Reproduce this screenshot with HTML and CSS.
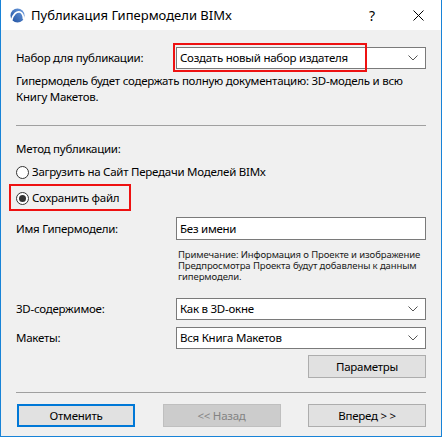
FILE: index.html
```html
<!DOCTYPE html>
<html lang="ru">
<head>
<meta charset="utf-8">
<title>Публикация Гипермодели BIMx</title>
<link rel="stylesheet" href="styles.css">
</head>
<body>
<div class="window">
  <div class="titlebar">
    <svg class="logo" width="17" height="15" viewBox="0 0 17 15">
      <defs>
        <linearGradient id="lg" x1="0" y1="1" x2="1" y2="0">
          <stop offset="0" stop-color="#1d4e9e"/>
          <stop offset="1" stop-color="#6f9fe0"/>
        </linearGradient>
      </defs>
      <circle cx="8.5" cy="7.5" r="7" fill="url(#lg)"/>
      <path d="M2.5 12.5 C4 6 8 3 11 4 C13.5 5 14.5 8 14.5 11" fill="none" stroke="#fff" stroke-width="1.8"/>
    </svg>
    <div class="title">Публикация Гипермодели BIMx</div>
    <div class="tb-help">?</div>
    <div class="tb-close">
      <svg width="11" height="11" viewBox="0 0 11 11"><path d="M0.5 0.5 L10.5 10.5 M10.5 0.5 L0.5 10.5" stroke="#000" stroke-width="1"/></svg>
    </div>
  </div>
  <div class="content">
    <div class="row row-set">
      <div class="label">Набор для публикации:</div>
      <div class="select"><span>Создать новый набор издателя</span><svg class="chev" width="10" height="6" viewBox="0 0 10 6"><path d="M0.5 0.5 L5 5 L9.5 0.5" fill="none" stroke="#555" stroke-width="1"/></svg></div>
    </div>
    <div class="desc">Гипермодель будет содержать полную документацию: 3D-модель и всю Книгу Макетов.</div>
    <div class="sep sep1"></div>
    <div class="method">Метод публикации:</div>
    <div class="radio r1"><span class="circle"></span>Загрузить на Сайт Передачи Моделей BIMx</div>
    <div class="radio r2"><span class="circle checked"></span>Сохранить файл</div>
    <div class="row row-name">
      <div class="label">Имя Гипермодели:</div>
      <div class="input">Без имени</div>
    </div>
    <div class="note">Примечание: Информация о Проекте и изображение Предпросмотра Проекта будут добавлены к данным гипермодели.</div>
    <div class="row row-3d">
      <div class="label">3D-содержимое:</div>
      <div class="select"><span>Как в 3D-окне</span><svg class="chev" width="10" height="6" viewBox="0 0 10 6"><path d="M0.5 0.5 L5 5 L9.5 0.5" fill="none" stroke="#555" stroke-width="1"/></svg></div>
    </div>
    <div class="row row-layouts">
      <div class="label">Макеты:</div>
      <div class="select"><span>Вся Книга Макетов</span><svg class="chev" width="10" height="6" viewBox="0 0 10 6"><path d="M0.5 0.5 L5 5 L9.5 0.5" fill="none" stroke="#555" stroke-width="1"/></svg></div>
    </div>
    <div class="params-row"><div class="btn">Параметры</div></div>
    <div class="sep sep2"></div>
    <div class="buttons">
      <div class="btn btn-default">Отменить</div>
      <div class="btn btn-disabled">&lt;&lt; Назад</div>
      <div class="btn">Вперед &gt; &gt;</div>
    </div>
  </div>
  <div class="mark mark1"></div>
  <div class="mark mark2"></div>
</div>
</body>
</html>
```
FILE: styles.css
```css
* { box-sizing: border-box; }
html, body { margin: 0; padding: 0; }
body {
  font-family: "Noto Sans", "Open Sans", sans-serif;
  font-size: 11.5px;
  letter-spacing: -0.25px;
  color: #000;
  background: #fff;
}
.window {
  position: relative;
  width: 442px;
  height: 437px;
  border: 1px solid #1883d7;
  border-top: none;
  background: #f0f0f0;
  display: flex;
  flex-direction: column;
}
.titlebar {
  height: 30px;
  background: #fff;
  display: flex;
  align-items: center;
  flex-shrink: 0;
}
.logo { margin-left: 8px; margin-top: 1px; }
.title {
  margin-left: 5px;
  font-size: 13px;
  letter-spacing: 0;
  flex: 1;
  line-height: 16px;
}
.tb-help {
  width: 46px;
  text-align: center;
  font-size: 14px;
}
.tb-close {
  width: 46px;
  display: flex;
  justify-content: center;
}
.content {
  padding: 0 15px;
  display: flex;
  flex-direction: column;
  line-height: 16px;
}
.row { display: flex; align-items: center; }
.label { width: 160px; flex-shrink: 0; }
.select, .input {
  flex: 1;
  height: 22px;
  background: #fff;
  border: 1px solid #7a7a7a;
  display: flex;
  align-items: center;
  padding: 0 7px 0 3px;
}
.select span { flex: 1; }
.chev { flex-shrink: 0; }
.row-set { margin-top: 17px; }
.desc { margin-top: 4px; }
.sep { height: 1px; background: #a0a0a0; }
.sep1 { margin-top: 20px; }
.method { margin-top: 15px; }
.radio { display: flex; align-items: center; height: 16px; }
.r1 { margin-top: 7px; }
.r2 { margin-top: 10px; }
.circle {
  width: 13px; height: 13px;
  border: 1px solid #333;
  border-radius: 50%;
  background: #fff;
  margin-right: 3px;
  display: flex;
  align-items: center;
  justify-content: center;
}
.circle.checked::after {
  content: "";
  width: 7px; height: 7px;
  border-radius: 50%;
  background: #333;
}
.row-name { margin-top: 11px; }
.row-name .input { height: 23px; }
.note {
  margin-top: 9px;
  margin-left: 162px;
  font-size: 9.5px;
  line-height: 11px;
  letter-spacing: -0.1px;
  color: #1a1a1a;
}
.row-3d { margin-top: 16px; }
.row-layouts { margin-top: 7px; }
.params-row { display: flex; justify-content: flex-end; margin-top: 6px; }
.btn {
  width: 118px;
  height: 23px;
  background: #e1e1e1;
  border: 1px solid #adadad;
  display: flex;
  align-items: center;
  justify-content: center;
}
.sep2 { margin-top: 14px; }
.buttons {
  display: flex;
  justify-content: space-between;
  margin-top: 11px;
  padding-left: 1px;
}
.btn-default { border: 2px solid #0078d7; }
.btn-disabled {
  background: #cccccc;
  border-color: #bfbfbf;
  color: #838383;
}
.mark {
  position: absolute;
  border: 2px solid #ee1111;
  pointer-events: none;
}
.mark1 { left: 172px; top: 43px; width: 194px; height: 29px; }
.mark2 { left: 8px; top: 184px; width: 122px; height: 27px; }
```
